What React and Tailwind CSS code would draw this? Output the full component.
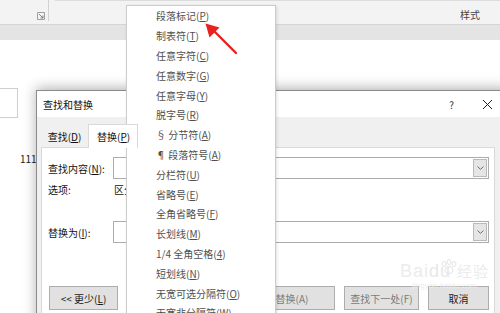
import React from "react";

const font = { fontFamily: '"Noto Sans CJK SC", "Noto Sans", sans-serif' };

const menuItems = [
  ["段落标记", "P"],
  ["制表符", "T"],
  ["任意字符", "C"],
  ["任意数字", "G"],
  ["任意字母", "Y"],
  ["脱字号", "R"],
  ["§ 分节符", "A"],
  ["¶ 段落符号", "A"],
  ["分栏符", "U"],
  ["省略号", "E"],
  ["全角省略号", "F"],
  ["长划线", "M"],
  ["1/4 全角空格", "4"],
  ["短划线", "N"],
  ["无宽可选分隔符", "O"],
  ["无宽非分隔符", "W"],
];

const Combo = () => (
  <div className="flex-1 h-[22px] border border-[#acacac] bg-white flex justify-end items-stretch p-px">
    <div className="w-[14px] bg-[#e5e5e5] border border-[#b9b9b9] flex items-center justify-center">
      <svg width="7" height="4" viewBox="0 0 7 4">
        <path d="M0.5 0.5 L3.5 3.3 L6.5 0.5" fill="none" stroke="#606060" strokeWidth="0.9" />
      </svg>
    </div>
  </div>
);

const Btn = ({ children, w, dim }) => (
  <div
    className={`h-[24px] shrink-0 bg-[#e1e1e1] border border-[#adadad] flex items-center justify-center text-[10px] ${
      dim ? "text-[#7a7a7a]" : "text-[#1a1a1a]"
    }`}
    style={{ width: w }}
  >
    {children}
  </div>
);

export default function App() {
  return (
    <div className="relative w-[500px] h-[313px] overflow-hidden bg-white" style={font}>
      {/* ribbon */}
      <div className="h-[25px] bg-[#f3f3f3] border-b border-[#d4d4d4] flex">
        <div className="w-[49px] h-[21px] border-r border-[#d2d2d2] flex items-end justify-end pr-[3px] pb-[1px]">
          <svg width="8" height="8" viewBox="0 0 8 8">
            <path d="M0.5 0.5 H7.5 V7.5 H0.5 Z" fill="none" stroke="#8a8a8a" strokeWidth="0.8" />
            <path d="M2 2 L6 6 M6 3.5 V6 H3.5" fill="none" stroke="#6a6a6a" strokeWidth="0.8" />
          </svg>
        </div>
        <div className="flex-1 border-t border-[#dcdcdc] ml-[6px] flex items-center justify-end pr-[20px] pt-[4px] text-[10px] text-[#444]">
          样式
        </div>
      </div>
      <div className="h-[15px] bg-[#e4e4e4]" />

      {/* document area */}
      <div className="relative">
        <div className="mt-[48px] w-[18px] h-[30px] border border-l-0 border-[#cfcfcf]" />
        <div className="pl-[20px] pt-[36px] text-[10px] text-[#222] leading-none">111</div>
      </div>

      {/* dialog */}
      <div className="absolute left-[36px] top-[90px] w-[480px] h-[240px] bg-[#f0f0f0] border border-[#8a8a8a] shadow-[0_-2px_12px_rgba(0,0,0,0.3)] flex flex-col">
        <div className="h-[26px] bg-white flex items-center pl-[6px] pr-[22px] text-[10px] text-[#111]">
          <span className="flex-1">查找和替换</span>
          <span className="text-[10px] text-[#333] mr-[28px]">?</span>
          <svg width="11" height="11" viewBox="0 0 11 11">
            <path d="M1 1 L10 10 M10 1 L1 10" stroke="#222" strokeWidth="1" />
          </svg>
        </div>
        <div className="flex-1 pl-[4px] pr-[20px] pt-[7px] flex flex-col">
          <div className="flex h-[23px] items-end text-[10px] text-[#111]">
            <div className="w-[47px] h-[21px] flex items-center justify-center">查找(<u>D</u>)</div>
            <div className="w-[50px] h-[24px] bg-white border border-b-0 border-[#d9d9d9] flex items-center pl-[8px] -mb-px relative z-10">
              替换(<u>P</u>)
            </div>
          </div>
          <div className="flex-1 bg-white border border-[#d9d9d9] pl-[6px] pr-[5px] pt-[9px] text-[10px] text-[#111]">
            <div className="flex items-center gap-[8px]">
              <span className="w-[57px]">查找内容(<u>N</u>):</span>
              <Combo />
            </div>
            <div className="flex items-center gap-[8px] mt-[2px] h-[16px]">
              <span className="w-[58px]">选项:</span>
              <span>区分全/半角</span>
            </div>
            <div className="flex items-center gap-[8px] mt-[24px]">
              <span className="w-[57px]">替换为(<u>I</u>):</span>
              <Combo />
            </div>
            <div className="flex items-center gap-[9px] mt-[43px] pl-px">
              <Btn w={69}>&lt;&lt; 更少(<u>L</u>)</Btn>
              <div className="flex-1" />
              <Btn w={75} dim>替换(R)</Btn>
              <Btn w={106} dim>全部替换(A)</Btn>
              <Btn w={75} dim>查找下一处(F)</Btn>
              <Btn w={61}>取消</Btn>
            </div>
          </div>
        </div>
      </div>

      {/* watermark */}
      <div className="absolute left-[400px] top-[259px] flex flex-col items-center pointer-events-none">
        <svg width="22" height="16" viewBox="0 0 22 16" className="mb-[-13px] ml-[8px]">
          <g fill="none" stroke="#e4e4e4" strokeWidth="1">
            <ellipse cx="6" cy="5" rx="2" ry="2.5" />
            <ellipse cx="11" cy="3" rx="2" ry="2.5" />
            <ellipse cx="16" cy="5" rx="2" ry="2.5" />
            <ellipse cx="11" cy="11" rx="4" ry="3.5" />
          </g>
        </svg>
        <div className="text-[18px] leading-none tracking-[1px] text-[#ececec]" style={{ fontFamily: '"Liberation Sans", sans-serif' }}>
          Bai<span className="text-[#e8e8e8]">du</span> <span className="text-[15px]" style={font}>经验</span>
        </div>
        <div className="text-[8px] leading-none mt-[2px] text-[#ededed]" style={{ fontFamily: '"Liberation Sans", sans-serif' }}>
          jingyan.baidu.com
        </div>
      </div>

      {/* dropdown menu */}
      <div className="absolute left-[126px] top-[5px] w-[150px] h-[320px] bg-white border border-[#cccccc] shadow-[1px_1px_3px_rgba(0,0,0,0.12)]">
        {menuItems.map(([label, key], i) => (
          <div key={i} className="h-[19.8px] flex items-center pl-[29px] text-[10px] text-[#505050] whitespace-nowrap">
            {label}(<u>{key}</u>)
          </div>
        ))}
      </div>

      {/* red arrow */}
      <svg className="absolute left-[200px] top-[18px]" width="45" height="42" viewBox="0 0 45 42">
        <path d="M36 35 L14 13" stroke="#e8231f" strokeWidth="2.4" strokeLinecap="round" />
        <path d="M5.5 5.5 L19.5 9.5 L9.5 19.5 Z" fill="#e8231f" />
      </svg>
    </div>
  );
}
